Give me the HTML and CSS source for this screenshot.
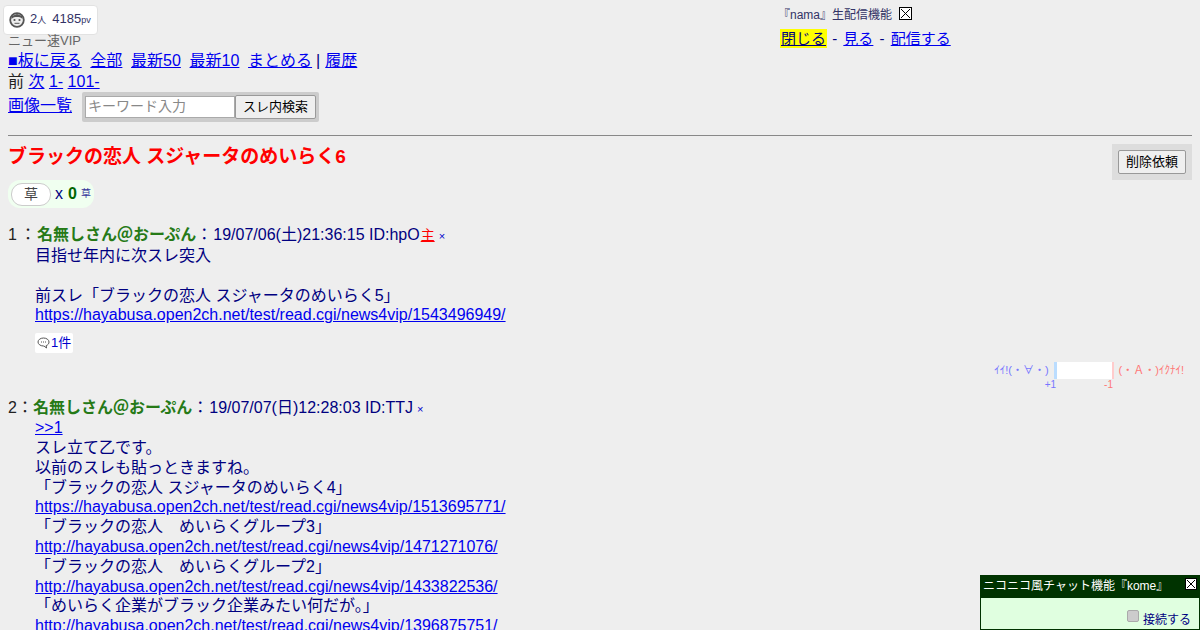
FILE: index.html
```html
<!DOCTYPE html>
<html lang="ja">
<head>
<meta charset="utf-8">
<title>ブラックの恋人 スジャータのめいらく6</title>
<link rel="stylesheet" href="styles.css">
</head>
<body>
<header class="top">
  <div class="counter">
    <svg class="face" width="16" height="16" viewBox="0 0 16 16"><circle cx="8" cy="8" r="6.800" fill="#eee" stroke="#555" stroke-width="1.800"/><path d="M2.500 7C4 5.200 6 5 8 5s4 .2 5.500 2L13 4 8 2 3 4z" fill="#555"/><circle cx="5.500" cy="8" r="1.100" fill="#555"/><circle cx="10.500" cy="8" r="1.100" fill="#555"/><rect x="5.500" y="10.800" width="5" height="1" fill="#555"/></svg>
    <span>2<small>人</small></span><span class="pv">4185<small>pv</small></span>
  </div>
  <div class="board">ニュー速VIP</div>
  <nav class="navline"><a href="#">■板に戻る</a><a href="#">全部</a><a href="#">最新50</a><a href="#">最新10</a><a href="#">まとめる</a><span class="sep">|</span><a href="#">履歴</a></nav>
  <nav class="pager">前 <a href="#">次</a> <a href="#">1-</a> <a href="#">101-</a></nav>
  <div class="searchline">
    <a class="imglink" href="#">画像一覧</a>
    <form class="search"><input class="kw" type="text" placeholder="キーワード入力"><button class="searchbtn" type="button">スレ内検索</button></form>
  </div>
</header>
<aside class="nama">
  <div class="nama-title">『nama』生配信機能<span class="xbox"><svg width="13" height="13" viewBox="0 0 13 13"><rect x=".5" y=".5" width="12" height="12" fill="#fff" stroke="#000"/><path d="M2 2l9 9M11 2l-9 9" stroke="#000"/></svg></span></div>
  <div class="nama-links"><a class="hl" href="#">閉じる</a> - <a href="#">見る</a> - <a href="#">配信する</a></div>
</aside>
<hr class="rule">
<div class="titlerow">
  <h1 class="title">ブラックの恋人 スジャータのめいらく6</h1>
  <div class="delbox"><button class="delbtn" type="button">削除依頼</button></div>
</div>
<div class="kusa"><span class="kusabtn">草</span><span class="kx">x</span><b class="kn">0</b><span class="ks">草</span></div>
<article class="res first">
  <div class="head"><span class="num">1</span><span class="colon">：</span><b class="name">名無しさん＠おーぷん</b><span class="colon2">：</span>19/07/06(土)21:36:15 ID:hpO<u class="nushi">主</u><span class="x">×</span></div>
  <div class="body">目指せ年内に次スレ突入<br><br>前スレ「ブラックの恋人 スジャータのめいらく5」<br><a href="#">https://hayabusa.open2ch.net/test/read.cgi/news4vip/1543496949/</a></div>
  <div class="replies"><svg class="bubble" width="13" height="12" viewBox="0 0 13 12"><path d="M6.500 1C3.400 1 1 2.800 1 5s2.400 4 5.500 4l.5 0 2.500 2-.3-2.400C11 8 12 6.600 12 5c0-2.200-2.400-4-5.500-4z" fill="none" stroke="#555"/><path d="M4 5h1M6 5h1M8 5h1" stroke="#555"/></svg><span>1件</span></div>
</article>
<div class="vote">
  <div class="vote-row"><span class="good">ｲｲ!(・∀・)</span><span class="meter"></span><span class="bad">(・Ａ・)ｲｸﾅｲ!</span></div>
  <div class="vote-nums"><span class="plus">+1</span><span class="minus">-1</span></div>
</div>
<article class="res second">
  <div class="head"><span class="num">2</span><span class="colon">：</span><b class="name">名無しさん＠おーぷん</b><span class="colon2">：</span>19/07/07(日)12:28:03 ID:TTJ<span class="x">×</span></div>
  <div class="body"><a href="#">&gt;&gt;1</a><br>スレ立て乙です。<br>以前のスレも貼っときますね。<br>「ブラックの恋人 スジャータのめいらく4」<br><a href="#">https://hayabusa.open2ch.net/test/read.cgi/news4vip/1513695771/</a><br>「ブラックの恋人　めいらくグループ3」<br><a href="#">http://hayabusa.open2ch.net/test/read.cgi/news4vip/1471271076/</a><br>「ブラックの恋人　めいらくグループ2」<br><a href="#">http://hayabusa.open2ch.net/test/read.cgi/news4vip/1433822536/</a><br>「めいらく企業がブラック企業みたい何だが。」<br><a href="#">http://hayabusa.open2ch.net/test/read.cgi/news4vip/1396875751/</a></div>
</article>
<aside class="chat">
  <div class="chat-title"><span>ニコニコ風チャット機能『kome』</span><svg class="chat-x" width="12" height="12" viewBox="0 0 12 12"><rect width="12" height="12" fill="#fff"/><rect x=".5" y=".5" width="11" height="11" fill="#fff" stroke="#000"/><path d="M2 2l8 8M10 2l-8 8" stroke="#000"/></svg></div>
  <div class="chat-body"><input class="chk" type="checkbox"><span>接続する</span></div>
</aside>
</body>
</html>
```
FILE: styles.css
```css
html, body { height: 630px; overflow: hidden; }
body { margin: 0; padding: 5px 8px 0; background: #eee; color: #000080; font: 16px/19.800px "Liberation Sans", "Noto Sans CJK JP", sans-serif; position: relative; box-sizing: border-box; }
a { color: #0000ee; }
.top { color: #222; }
.counter { display: inline-flex; align-items: center; height: 30px; width: 95px; box-sizing: border-box; margin-left: -5px; padding: 0 5px; background: #fff; border: 1px solid #e2e2e2; border-radius: 4px; font-size: 13px; color: #336; vertical-align: top; }
.face { margin-right: 5px; }
.counter small { font-size: 9px; }
.pv { margin-left: 6px; }
.board { font-size: 13px; line-height: 13px; color: #666; margin-top: -1px; }
.navline { margin-top: 3px; line-height: 22px; white-space: nowrap; }
.navline a { margin-right: 8.700px; }
.navline .sep { margin: 0 5px 0 -4.700px; color: #000080; }
.navline a:last-child { margin-right: 0; }
.pager { line-height: 20px; color: #222; }
.searchline { display: flex; align-items: flex-start; height: 30px; }
.imglink { line-height: 28px; }
.search { display: flex; align-items: center; margin-left: 10px; padding: 3px; background: #ccc; border-radius: 2px; }
.kw { width: 150px; height: 22px; box-sizing: border-box; padding: 0 2px 3px; border: 1px solid #aaa; background: #fff; font: 14px "Liberation Sans", "Noto Sans CJK JP", sans-serif; }
.kw::placeholder { color: #888; }
.searchbtn, .delbtn { height: 24px; box-sizing: border-box; padding: 0 7px 4px; border: 1px solid #999; border-radius: 2px; background: #efefef; color: #000; font: 13px "Liberation Sans", "Noto Sans CJK JP", sans-serif; }
.nama { position: absolute; left: 780px; top: 5px; }
.nama-title { display: flex; align-items: flex-start; font-size: 12px; line-height: 20px; color: #336; margin-left: -2px; }
.xbox { margin: 2px 0 0 7px; line-height: 0; }
.nama-links { margin-top: 4px; font-size: 15px; color: #000080; word-spacing: 2px; }
.hl { background: #ff0; color: #000080; padding: 1px; margin-right: -1px; }
.rule { margin: 13px 0 0; border: 0; border-top: 1px solid #888; height: 0; }
.titlerow { display: flex; justify-content: space-between; align-items: flex-start; margin-top: 8px; }
.title { margin: 1px 0 0; font-size: 19px; line-height: 24px; color: #f00; }
.delbox { padding: 6px; background: #ddd; }
.delbtn { display: block; }
.kusa { display: flex; width: fit-content; align-items: center; height: 28px; padding: 0 3px; background: #f0fff0; border-radius: 12px; color: #000080; }
.kusabtn { width: 38px; height: 21px; border: 1px solid #ccc; border-radius: 11px; background: #fff; text-align: center; font-size: 14px; line-height: 21px; color: #444; }
.kx { margin-left: 4px; }
.kn { margin-left: 5px; color: #060; }
.ks { margin-left: 4px; font-size: 10px; color: #339; }
.first { margin-top: 17px; }
.head { white-space: nowrap; line-height: 20px; }
.num { color: #222; }
.colon { margin-left: 3px; margin-right: 1px; color: #222; }
.colon2 { margin-right: 1px; }
.name { color: #267a17; }
.nushi { color: #f00; font-size: 14px; margin-left: 1px; }
.x { margin-left: 4px; font-size: 11px; color: #00c; }
.body { margin-left: 27px; }
.second .body { margin-top: -1px; }
.replies { display: flex; width: fit-content; align-items: center; gap: 1px; margin: 8px 0 0 27px; height: 20px; padding: 0 2px; background: #fff; border-radius: 2px; font-size: 13px; color: #00c; }
.vote { display: flex; flex-direction: column; align-items: flex-end; margin-top: 9px; padding-right: 8px; }
.vote-row { display: flex; align-items: center; font-size: 11px; height: 17px; }
.good { color: #77f; }
.bad { color: #f77; }
.meter { width: 55px; height: 17px; margin: 0 5px 0 5px; background: #fff; border-left: 3px solid #bdf; border-right: 2px solid #fcc; }
.vote-nums { display: flex; font-size: 10px; line-height: 12px; margin-right: 71px; }
.plus { color: #77f; margin-right: 48px; }
.minus { color: #f77; }
.second { margin-top: 7px; }
.second .colon { margin-left: 0; margin-right: 0; }
.chat { position: absolute; right: 0; bottom: 0; width: 220px; height: 55px; box-sizing: border-box; border: 1px solid #030; background: #e0ffe0; font-size: 12px; }
.chat-title { display: flex; justify-content: space-between; align-items: center; height: 22px; padding: 0 2px; background: #030; color: #fff; }
.chat-x { align-self: flex-start; margin-top: 2px; }
.chat-body { display: flex; justify-content: flex-end; align-items: flex-end; height: 31px; padding: 0 8px 0 0; color: #000080; line-height: 18px; }
.chk { appearance: none; margin: 0 4px 7px 0; width: 12px; height: 12px; background: #ccc; border: 1px solid #aaa; border-radius: 2px; box-sizing: border-box; }
```
